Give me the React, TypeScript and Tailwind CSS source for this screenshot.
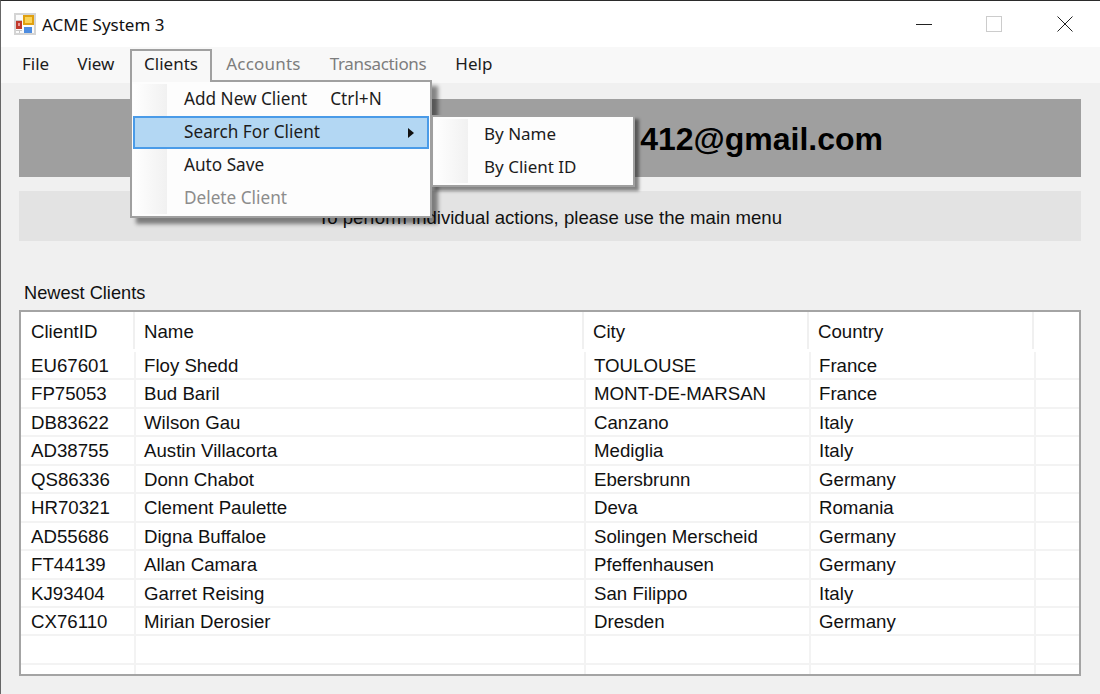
import React from 'react';

const CLIENTS = [
  ['EU67601', 'Floy Shedd', 'TOULOUSE', 'France'],
  ['FP75053', 'Bud Baril', 'MONT-DE-MARSAN', 'France'],
  ['DB83622', 'Wilson Gau', 'Canzano', 'Italy'],
  ['AD38755', 'Austin Villacorta', 'Mediglia', 'Italy'],
  ['QS86336', 'Donn Chabot', 'Ebersbrunn', 'Germany'],
  ['HR70321', 'Clement Paulette', 'Deva', 'Romania'],
  ['AD55686', 'Digna Buffaloe', 'Solingen Merscheid', 'Germany'],
  ['FT44139', 'Allan Camara', 'Pfeffenhausen', 'Germany'],
  ['KJ93404', 'Garret Reising', 'San Filippo', 'Italy'],
  ['CX76110', 'Mirian Derosier', 'Dresden', 'Germany'],
];

const UI_FONT = "font-['Noto_Sans',sans-serif]";

function AppIcon() {
  return (
    <svg width="22" height="22" viewBox="0 0 22 22">
      <rect x="0" y="0" width="22" height="22" fill="#d4d4d4" />
      <rect x="2" y="2" width="18" height="18" fill="#fbfbfb" />
      <rect x="2" y="7" width="6" height="1" fill="#c8c8c8" />
      <rect x="2" y="8" width="6" height="8" fill="#c0392b" />
      <rect x="4" y="10" width="2" height="3" fill="#eb9a9a" />
      <rect x="9" y="2" width="11" height="10" fill="#e0a010" />
      <rect x="11" y="4" width="7" height="6" fill="#fad45a" />
      <rect x="10" y="14" width="8" height="6" fill="#4d8ce0" />
      <rect x="2" y="17" width="6" height="1" fill="#c8c8c8" />
      <rect x="5" y="17" width="1" height="3" fill="#c8c8c8" />
    </svg>
  );
}

function MenuItem({ label, shortcut, disabled, active, arrow, sub }: { label: string; shortcut?: string; disabled?: boolean; active?: boolean; arrow?: boolean; sub?: boolean }) {
  return (
    <div
      className={`relative flex h-[33px] items-center pb-[2px] ${sub ? 'pl-[51px]' : active ? 'mx-px border-2 border-[#4a9be8] bg-[#b3d7f3] pl-[49px]' : 'pl-[52px]'} ${disabled ? 'text-[#8c8c8c]' : 'text-[#1c1c1c]'}`}
    >
      <span>{label}</span>
      {shortcut && <span className="ml-[23px]">{shortcut}</span>}
      {arrow && <span className="absolute right-[13px] top-[10px] h-0 w-0 border-y-[5px] border-l-[6px] border-y-transparent border-l-[#111]" />}
    </div>
  );
}

export default function App() {
  return (
    <div className="relative flex h-[694px] w-[1100px] flex-col overflow-hidden border-l border-t border-l-[#666] border-t-[#2b2b2b] bg-[#f0f0f0]">
      {/* Title bar */}
      <div className={`flex h-[46px] items-center bg-white pl-[13px] text-[#111] ${UI_FONT}`}>
        <AppIcon />
        <span className="ml-[6px] pt-[2px] text-[17px]">ACME System 3</span>
        <div className="ml-auto flex items-center pr-[27px]">
          <div className="h-px w-[16px] bg-[#222]" />
          <div className="mb-[1px] ml-[54px] h-[16px] w-[16px] border border-[#ccc]" />
          <svg className="mb-[1px] ml-[55px]" width="16" height="16" viewBox="0 0 16 16" stroke="#222" strokeWidth="1">
            <path d="M0.5 0.5 L15.5 15.5 M15.5 0.5 L0.5 15.5" />
          </svg>
        </div>
      </div>

      {/* Menu bar */}
      <div className={`flex h-[36px] items-center bg-[#f8f8f8] pb-[2px] pl-[8px] text-[17px] text-[#1c1c1c] ${UI_FONT}`}>
        <span className="px-[13px]">File</span>
        <span className="ml-[2px] px-[13px]">View</span>
        <span className="ml-[2px] px-[13px] opacity-0">Clients</span>
        <span className="ml-[4px] px-[13px] tracking-[0.2px] text-[#7d7d7d]">Accounts</span>
        <span className="ml-[3px] px-[13px] tracking-[-0.33px] text-[#7d7d7d]">Transactions</span>
        <span className="ml-[3px] px-[13px]">Help</span>
      </div>

      {/* Body */}
      <div className="flex flex-1 flex-col pl-[18px] pr-[19px] pt-[16px] font-['Liberation_Sans',sans-serif] text-[#111]">
        <div className="flex h-[78px] items-center justify-end bg-[#9f9f9f] pr-[198px] pt-[2px] text-[32px] font-bold text-black">
          412@gmail.com
        </div>
        <div className="mt-[14px] flex h-[50px] items-center justify-center bg-[#e3e3e3] pt-[3px] text-[18.6px]">
          To perform individual actions, please use the main menu
        </div>
        <div className="mt-[41px] h-[28px] pl-[5px] text-[18.2px] leading-[22px]">Newest Clients</div>
        <div className="h-[366px] overflow-hidden border-2 border-[#a4a4a4] bg-white text-[18.67px]">
          <div className="grid h-[37px] grid-cols-[114px_449px_225px_225px_1fr] items-center">
            {['ClientID', 'Name', 'City', 'Country'].map((h, i) => (
              <div key={h} className={`flex h-full items-center border-r-2 border-[#f0f0f0] pt-[2px] ${i === 0 ? 'pl-[10px]' : 'pl-[9px]'}`}>{h}</div>
            ))}
            <div />
          </div>
          <div className="pt-[3px]">
            {[...CLIENTS, ['', '', '', ''], ['', '', '', '']].map((row, i) => (
              <div key={i} className="grid h-[28.44px] grid-cols-[113px_450px_225px_225px_1fr] border-b-2 border-[#f3f3f3] pl-[2px]">
                {row.map((cell, j) => (
                  <div key={j} className="flex items-center border-r-2 border-[#f3f3f3] pl-[8px]">{cell}</div>
                ))}
                <div />
              </div>
            ))}
          </div>
        </div>
      </div>

      {/* Open menus */}
      <div className={`absolute left-[129px] top-[48px] z-20 flex h-[33px] w-[82px] items-center justify-center border-2 border-b-0 border-[#a0a0a0] bg-[#f8f8f8] pb-[5px] text-[17px] text-[#1c1c1c] ${UI_FONT}`}>
        Clients
      </div>
      <div className={`absolute left-[129px] top-[79px] z-10 w-[302px] border-2 border-[#a0a0a0] bg-[#fdfdfd] py-[1px] text-[17.2px] shadow-[6px_6px_4px_rgba(0,0,0,0.45)] ${UI_FONT}`}>
        <div className="absolute bottom-[2px] left-[1px] top-[2px] w-[34px] bg-gradient-to-r from-white to-[#f1f1f1]" />
        <div className="relative">
          <MenuItem label="Add New Client" shortcut="Ctrl+N" />
          <MenuItem label="Search For Client" active arrow />
          <MenuItem label="Auto Save" />
          <MenuItem label="Delete Client" disabled />
        </div>
      </div>
      <div className={`absolute left-[430px] top-[114px] z-20 w-[204px] border-2 border-[#a0a0a0] bg-[#fdfdfd] py-[1px] text-[17px] shadow-[4px_4px_3px_rgba(0,0,0,0.45)] ${UI_FONT}`}>
        <div className="absolute bottom-[2px] left-[1px] top-[2px] w-[34px] bg-gradient-to-r from-white to-[#f1f1f1]" />
        <div className="relative">
          <MenuItem label="By Name" sub />
          <MenuItem label="By Client ID" sub />
        </div>
      </div>
    </div>
  );
}
